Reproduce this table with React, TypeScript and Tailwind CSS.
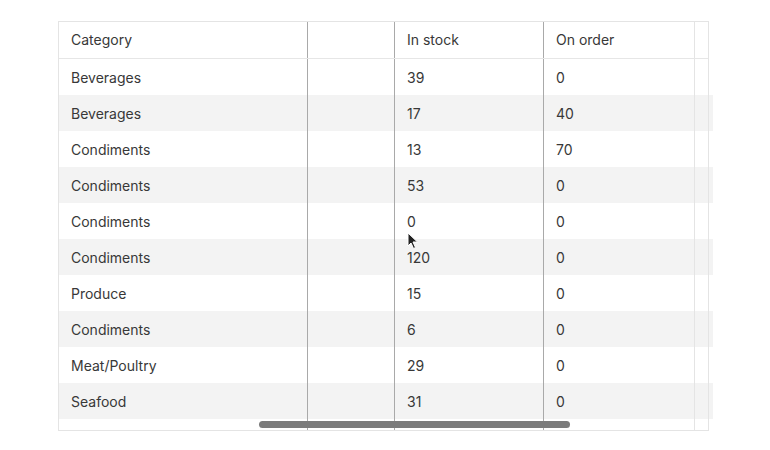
import React from "react";

const rows: [string, string, string][] = [
  ["Beverages", "39", "0"],
  ["Beverages", "17", "40"],
  ["Condiments", "13", "70"],
  ["Condiments", "53", "0"],
  ["Condiments", "0", "0"],
  ["Condiments", "120", "0"],
  ["Produce", "15", "0"],
  ["Condiments", "6", "0"],
  ["Meat/Poultry", "29", "0"],
  ["Seafood", "31", "0"],
];

const grid = "grid grid-cols-[249px_87px_149px_151px_13px_5px]";

export default function App() {
  return (
    <div className="w-[770px] h-[450px] bg-white relative" style={{ fontFamily: "Inter, 'Liberation Sans', sans-serif" }}>
      <div className="absolute left-[58px] top-[21px] w-[651px] h-[410px] border border-[#e4e4e4]" />
      <div className="pt-[22px] pl-[59px]">
        <div className={`${grid} h-[37px] border-b border-[#e6e6e6] w-[649px] text-[14px] text-[#383838]`}>
          <div className="border-r border-[#a9a9a9] flex items-center pl-[12px] pb-[2px]">Category</div>
          <div className="border-r border-[#a9a9a9]" />
          <div className="border-r border-[#a9a9a9] flex items-center pl-[12px] pb-[2px]">In stock</div>
          <div className="border-r border-[#e4e4e4] flex items-center pl-[12px] pb-[2px]">On order</div>
          <div />
        </div>
        {rows.map((r, i) => (
          <div
            key={i}
            className={`${grid} h-[36px] w-[654px] text-[14px] text-[#383838] ${i % 2 === 1 ? "bg-[#f3f3f3]" : ""}`}
          >
            <div className="border-r border-[#a9a9a9] flex items-center pl-[12px]">{r[0]}</div>
            <div className="border-r border-[#a9a9a9]" />
            <div className="border-r border-[#a9a9a9] flex items-center pl-[12px]">{r[1]}</div>
            <div className="border-r border-[#e4e4e4] flex items-center pl-[12px]">{r[2]}</div>
            <div />
            <div />
          </div>
        ))}
        <div className={`${grid} h-[11px] w-[649px] relative`}>
          <div className="border-r border-[#a9a9a9]" />
          <div className="border-r border-[#a9a9a9]" />
          <div className="border-r border-[#a9a9a9]" />
          <div className="border-r border-[#e4e4e4]" />
          <div />
          <div className="absolute left-[200px] top-[2px] w-[311px] h-[7px] rounded-full bg-[#7b7b7b]" />
        </div>
      </div>
      <svg className="absolute left-[407px] top-[232px]" width="12" height="18" viewBox="0 0 12 18">
        <path d="M1 1 L1 14 L4 11 L6.5 16.5 L8.5 15.5 L6 10 L10.5 10 Z" fill="#222" stroke="#fff" strokeWidth="1" />
      </svg>
    </div>
  );
}
